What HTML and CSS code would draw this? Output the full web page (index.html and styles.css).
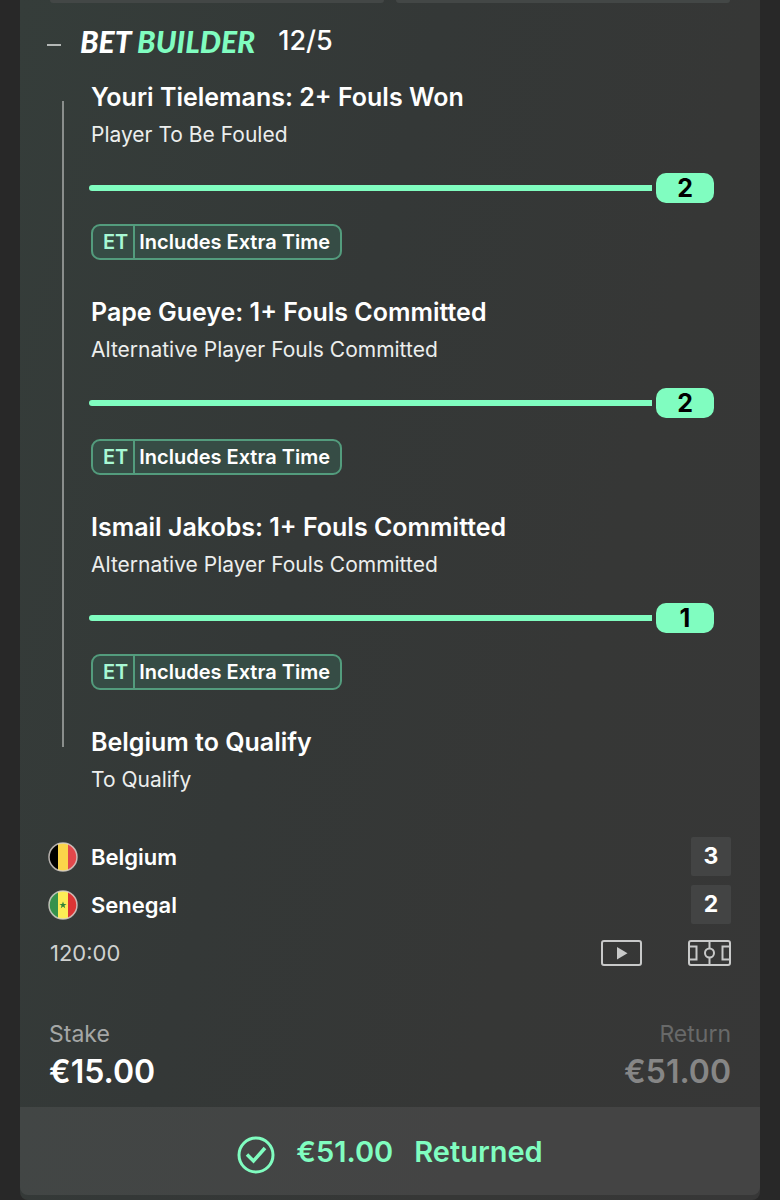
FILE: index.html
```
<!DOCTYPE html>
<html lang="en">
<head>
  <meta charset="UTF-8">
  <meta name="viewport" content="width=device-width, initial-scale=1.0">
  <title>Bet Builder</title>
  <link rel="stylesheet" href="styles.css">
</head>
<body>
  <main class="bet-card">
    <div class="top-actions">
      <span class="top-action"></span>
      <span class="top-action"></span>
    </div>

    <header class="bet-header">
      <button class="collapse" type="button" aria-label="Collapse bet"></button>
      <h1 class="logo">BET <span>BUILDER</span></h1>
      <span class="odds">12/5</span>
    </header>

    <!-- Selections -->
    <section class="selections">
      <div class="rail"></div>
      <div class="legs">
        <article class="leg">
          <h2>Youri Tielemans: 2+ Fouls Won</h2>
          <p>Player To Be Fouled</p>
          <div class="progress"><span class="track"></span><span class="count">2</span></div>
          <div class="tag"><span class="tag-code">ET</span><span class="tag-text">Includes Extra Time</span></div>
        </article>
        <article class="leg">
          <h2>Pape Gueye: 1+ Fouls Committed</h2>
          <p>Alternative Player Fouls Committed</p>
          <div class="progress"><span class="track"></span><span class="count">2</span></div>
          <div class="tag"><span class="tag-code">ET</span><span class="tag-text">Includes Extra Time</span></div>
        </article>
        <article class="leg">
          <h2>Ismail Jakobs: 1+ Fouls Committed</h2>
          <p>Alternative Player Fouls Committed</p>
          <div class="progress"><span class="track"></span><span class="count">1</span></div>
          <div class="tag"><span class="tag-code">ET</span><span class="tag-text">Includes Extra Time</span></div>
        </article>
        <article class="leg">
          <h2>Belgium to Qualify</h2>
          <p>To Qualify</p>
        </article>
      </div>
    </section>

    <!-- Match score -->
    <section class="match">
      <div class="team">
        <svg class="flag" viewBox="0 0 30 30" aria-hidden="true">
          <clipPath id="flag-clip"><circle cx="15" cy="15" r="14"/></clipPath>
          <g clip-path="url(#flag-clip)">
            <path fill="#000" d="M0 0h10v30H0z"/>
            <path fill="#fbd54a" d="M10 0h10v30H10z"/>
            <path fill="#e2474b" d="M20 0h10v30H20z"/>
          </g>
          <circle cx="15" cy="15" r="14" fill="none" stroke="#dcd5d0" stroke-opacity=".8" stroke-width="1.5"/>
        </svg>
        <span class="team-name">Belgium</span>
        <span class="score">3</span>
      </div>
      <div class="team">
        <svg class="flag" viewBox="0 0 30 30" aria-hidden="true">
          <g clip-path="url(#flag-clip)">
            <path fill="#35924c" d="M0 0h10v30H0z"/>
            <path fill="#fcec56" d="M10 0h10v30H10z"/>
            <path fill="#dc3434" d="M20 0h10v30H20z"/>
          </g>
          <path fill="#2f8438" d="M15 11.500l.9 2.500h2.600l-2.100 1.600.8 2.600-2.200-1.600-2.200 1.600.8-2.600-2.100-1.600h2.600z"/>
          <circle cx="15" cy="15" r="14" fill="none" stroke="#dcd5d0" stroke-opacity=".8" stroke-width="1.500"/>
        </svg>
        <span class="team-name">Senegal</span>
        <span class="score">2</span>
      </div>
      <div class="match-info">
        <span class="clock">120:00</span>
        <button class="icon-btn" type="button" aria-label="Watch video">
          <svg width="42" height="26" viewBox="0 0 42 26">
            <rect x="2" y="1" width="39" height="24" rx="2" fill="none" stroke="#c8c9c9" stroke-width="2"/>
            <path fill="#c8c9c9" d="M17 7v12.500l10.500-6.200z"/>
          </svg>
        </button>
        <button class="icon-btn" type="button" aria-label="Match live">
          <svg width="44" height="26" viewBox="0 0 44 26" fill="none" stroke="#c8c9c9" stroke-width="2">
            <rect x="2" y="1" width="41" height="24" rx="2"/>
            <path d="M2 6.500h7.500v13H2M43 6.500h-7.500v13H43M22.500 1v7.500M22.500 17.500V25"/>
            <circle cx="22.500" cy="13" r="4.500"/>
          </svg>
        </button>
      </div>
    </section>

    <section class="totals">
      <div class="total">
        <span class="total-label">Stake</span>
        <strong class="total-value">€15.00</strong>
      </div>
      <div class="total total-return">
        <span class="total-label">Return</span>
        <strong class="total-value">€51.00</strong>
      </div>
    </section>

    <footer class="result">
      <svg class="tick" width="38" height="38" viewBox="0 0 38 38" fill="none" stroke="#80fdc0" stroke-width="3">
        <circle cx="19" cy="19" r="17"/>
        <path stroke-width="3.500" d="M10 18.500l6.500 6.500L28 12"/>
      </svg>
      <span>€51.00</span>
      <span>Returned</span>
    </footer>
  </main>
</body>
</html>
```

FILE: styles.css
```
* {
  margin: 0;
  padding: 0;
  box-sizing: border-box;
}
body {
  font-family: Inter, "Liberation Sans", sans-serif;
  background: #282828;
  color: #fff;
}
button {
  background: none;
  border: none;
  cursor: pointer;
}
.bet-card {
  margin: 0 20px;
  padding-bottom: 5px;
  border-radius: 0 0 8px 8px;
  background: linear-gradient(105deg, #353d3a 0%, #343837 40%, #363736 70%, #373737 100%);
}
/* Bottom edge of the buttons above the bet */
.top-actions {
  display: flex;
  gap: 12px;
  padding: 0 30px;
}
.top-action {
  flex: 1;
  height: 3px;
  background: #434746;
  border-radius: 0 0 3px 3px;
}
/* Header */
.bet-header {
  display: flex;
  align-items: center;
  height: 75px;
  padding: 0 27px;
}
.collapse {
  width: 14px;
  height: 18px;
  margin-right: 19px;
  padding-top: 8px;
}
.collapse::before {
  content: "";
  display: block;
  height: 2px;
  background: #b4b8b6;
}
.logo {
  font-family: Lato, "Liberation Sans", sans-serif;
  font-size: 30px;
  font-weight: 900;
  font-style: italic;
}
.logo span {
  color: #80fdc0;
}
.odds {
  margin-left: 23px;
  font-size: 27px;
  font-weight: 500;
}
/* Selections */
.selections {
  display: flex;
  padding: 0 46px 0 42px;
}
.rail {
  width: 2px;
  margin: 23px 27px 52px 0;
  background: #8a8e8c;
}
.legs {
  flex: 1;
}
.leg + .leg {
  margin-top: 33px;
}
.leg h2 {
  font-size: 25px;
  font-weight: 600;
  line-height: 38px;
}
.leg p {
  font-size: 21px;
  line-height: 38px;
  color: #eceeed;
}
.progress {
  display: flex;
  align-items: center;
  gap: 4px;
  margin: 19px 0 21px -2px;
}
.track {
  flex: 1;
  height: 6px;
  background: #80fdc0;
  border-radius: 3px 0 0 3px;
}
.count {
  width: 58px;
  background: #80fdc0;
  border-radius: 10px;
  color: #000;
  font-size: 25px;
  font-weight: 700;
  line-height: 30px;
  text-align: center;
}
.tag {
  display: inline-flex;
  vertical-align: top;
  border: 2px solid #539c7d;
  border-radius: 9px;
  background: #364c45;
  font-size: 20px;
  font-weight: 600;
  line-height: 32px;
}
.tag-code {
  padding: 0 5px 0 10px;
  border-right: 2px solid #539c7d;
  color: #a8f8d4;
}
.tag-text {
  padding: 0 10px 0 4px;
}
/* Match score */
.match {
  display: flex;
  flex-direction: column;
  gap: 9px;
  margin-top: 38px;
  padding: 0 29px 0 28px;
}
.team {
  display: flex;
  align-items: center;
}
.flag {
  width: 30px;
  height: 30px;
  margin-right: 13px;
}
.team-name {
  flex: 1;
  font-size: 22px;
  font-weight: 600;
}
.score {
  width: 40px;
  background: #434444;
  border-radius: 2px;
  font-size: 23px;
  font-weight: 700;
  line-height: 39px;
  text-align: center;
}
.match-info {
  display: flex;
  align-items: center;
  gap: 45px;
  height: 40px;
}
.clock {
  flex: 1;
  padding-left: 2px;
  font-size: 22px;
  color: #cfd1d0;
}
.icon-btn svg {
  display: block;
}
/* Stake and return */
.totals {
  display: flex;
  justify-content: space-between;
  padding: 45px 29px 13px;
}
.total {
  display: flex;
  flex-direction: column;
}
.total-label {
  font-size: 23px;
  line-height: 32px;
  color: #a5a7a6;
}
.total-value {
  font-size: 32px;
  font-weight: 600;
  line-height: 44px;
}
.total-return {
  text-align: right;
}
.total-return .total-label {
  color: #686969;
}
.total-return .total-value {
  color: #868686;
}
/* Result bar */
.result {
  display: flex;
  align-items: center;
  justify-content: center;
  gap: 21px;
  height: 88px;
  background: linear-gradient(105deg, #424645, #444444 60%);
  border-radius: 0 0 8px 8px;
  color: #80fdc0;
  font-size: 29px;
  font-weight: 600;
}
.tick {
  margin-top: 8px;
}
```
